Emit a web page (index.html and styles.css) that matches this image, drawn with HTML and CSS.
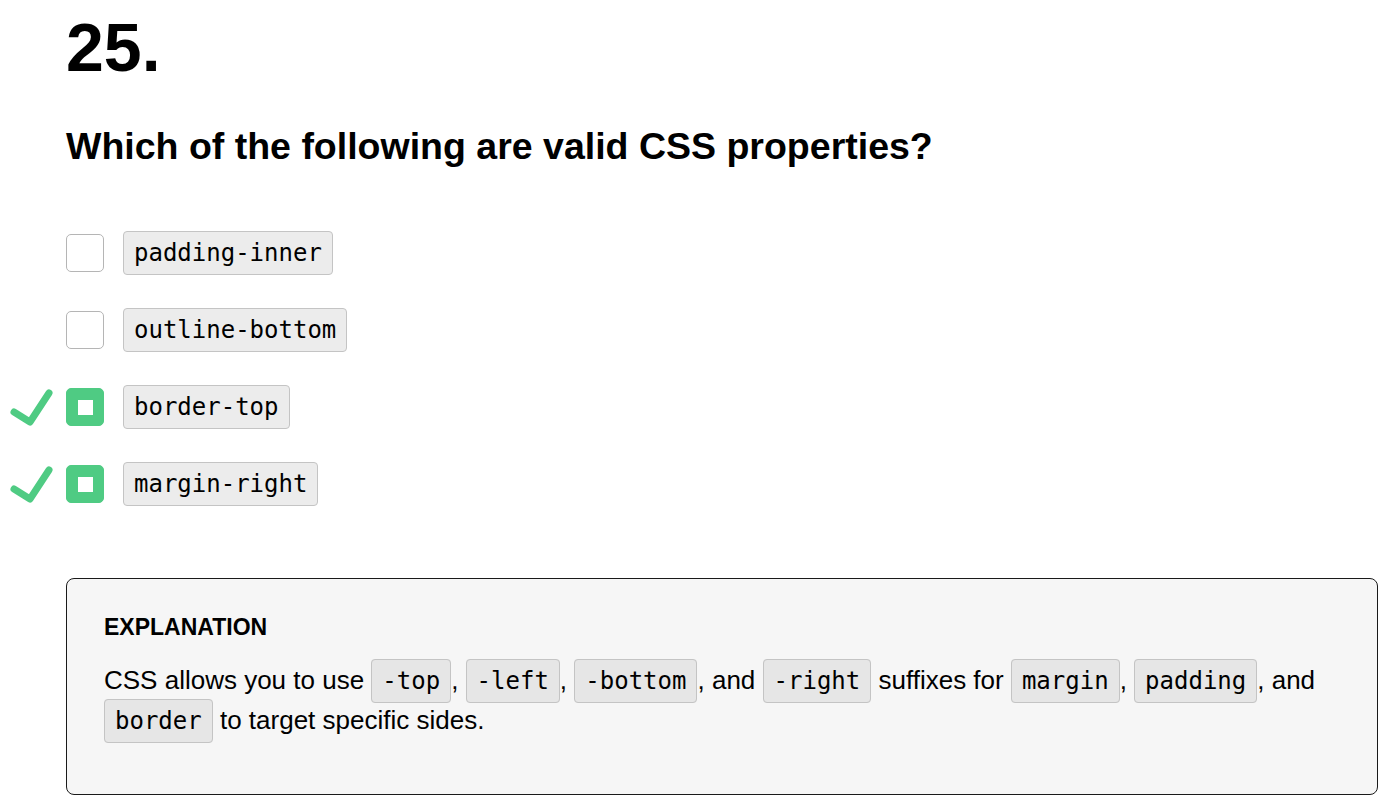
FILE: index.html
```html
<!DOCTYPE html>
<html lang="en">
<head>
<meta charset="utf-8">
<title>Question 25</title>
<link rel="stylesheet" href="styles.css">
</head>
<body>
<main class="question">
  <h1 class="num">25.</h1>
  <h2 class="prompt">Which of the following are valid CSS properties?</h2>
  <ul class="options">
    <li class="option">
      <span class="box"></span>
      <code class="pill">padding-inner</code>
    </li>
    <li class="option">
      <span class="box"></span>
      <code class="pill">outline-bottom</code>
    </li>
    <li class="option">
      <span class="mark"><svg viewBox="0 0 60 44" width="60" height="44"><path d="M14 27 L30 37 L49 8" fill="none" stroke="#4fcb83" stroke-width="7" stroke-linecap="round" stroke-linejoin="round"/></svg></span>
      <span class="box checked"></span>
      <code class="pill">border-top</code>
    </li>
    <li class="option">
      <span class="mark"><svg viewBox="0 0 60 44" width="60" height="44"><path d="M14 27 L30 37 L49 8" fill="none" stroke="#4fcb83" stroke-width="7" stroke-linecap="round" stroke-linejoin="round"/></svg></span>
      <span class="box checked"></span>
      <code class="pill">margin-right</code>
    </li>
  </ul>
  <section class="explain">
    <h3 class="explain-title">EXPLANATION</h3>
    <p class="explain-text">CSS allows you to use <code class="code">-top</code>, <code class="code">-left</code>, <code class="code">-bottom</code>, and <code class="code">-right</code> suffixes for <code class="code">margin</code>, <code class="code">padding</code>, and <code class="code">border</code> to target specific sides.</p>
  </section>
</main>
</body>
</html>
```

FILE: styles.css
```css
* { box-sizing: border-box; }
html, body { margin: 0; padding: 0; background: #fff; }
body {
  font-family: "Liberation Sans", Arial, sans-serif;
  color: #000;
}
.question {
  padding: 0 13px 0 66px;
}
.num {
  margin: 0;
  padding-top: 8px;
  font-size: 68px;
  line-height: 78px;
  font-weight: 700;
}
.prompt {
  margin: 38px 0 0;
  font-size: 37.5px;
  line-height: 44px;
  font-weight: 700;
}
.options {
  list-style: none;
  margin: 63px 0 0;
  padding: 0;
  display: flex;
  flex-direction: column;
  gap: 33px;
}
.option {
  display: flex;
  align-items: center;
  height: 44px;
  position: relative;
}
.mark {
  position: absolute;
  left: -66px;
  top: 0;
  width: 60px;
  height: 44px;
}
.mark svg { display: block; }
.box {
  width: 38px;
  height: 38px;
  border: 1px solid #b5b5b5;
  border-radius: 5px;
  background: #fff;
  margin-right: 19px;
  flex: none;
}
.box.checked {
  background: #4fcb83;
  border-color: #4fcb83;
  display: flex;
  align-items: center;
  justify-content: center;
}
.box.checked::after {
  content: "";
  width: 15px;
  height: 15px;
  background: #fff;
}
.pill {
  font-family: "DejaVu Sans Mono", "Liberation Mono", monospace;
  font-size: 24px;
  line-height: 42px;
  height: 44px;
  padding: 0 10px;
  background: #ececec;
  border: 1px solid #c4c4c4;
  border-radius: 4px;
  color: #000;
  display: inline-block;
}
.explain {
  margin-top: 72px;
  background: #f6f6f6;
  border: 1px solid #1a1a1a;
  border-radius: 8px;
  padding: 35px 37px 37px;
  min-height: 217px;
}
.explain-title {
  margin: 0;
  font-size: 23px;
  line-height: 26px;
  font-weight: 700;
}
.explain-text {
  margin: 21px 0 0;
  font-size: 26px;
  line-height: 39px;
}
.code {
  font-family: "DejaVu Sans Mono", "Liberation Mono", monospace;
  font-size: 24px;
  padding: 7px 10px;
  background: #e6e6e6;
  border: 1px solid #c4c4c4;
  border-radius: 4px;
  color: #000;
}
```
